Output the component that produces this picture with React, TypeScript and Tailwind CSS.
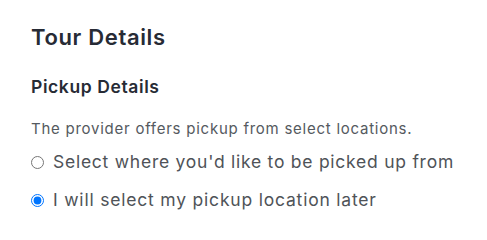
export default function App() {
  return (
    <div
      className="w-[487px] h-[232px] bg-white pl-[31px] pt-[23px]"
      style={{ fontFamily: "Inter, 'Noto Sans', sans-serif" }}
    >
      <h1 className="text-[22px] leading-[28px] font-semibold tracking-[0.65px] text-[#272b35]">
        Tour Details
      </h1>
      <h2 className="mt-[25px] text-[17.5px] leading-[22px] font-semibold tracking-[0.6px] text-[#272b35]">
        Pickup Details
      </h2>
      <p className="mt-[21px] text-[15px] leading-[20px] tracking-[0.75px] text-[#555a60]">
        The provider offers pickup from select locations.
      </p>
      <div className="mt-[12px] flex flex-col gap-[16px]">
        <label className="flex items-center gap-[9px] text-[17.5px] leading-[22px] tracking-[0.75px] text-[#4f5358]">
          <input type="radio" name="pickup" className="m-0 w-[13px] h-[13px]" />
          Select where you'd like to be picked up from
        </label>
        <label className="flex items-center gap-[9px] text-[17.5px] leading-[22px] tracking-[0.8px] text-[#4f5358]">
          <input type="radio" name="pickup" defaultChecked className="m-0 w-[13px] h-[13px]" />
          I will select my pickup location later
        </label>
      </div>
    </div>
  );
}
